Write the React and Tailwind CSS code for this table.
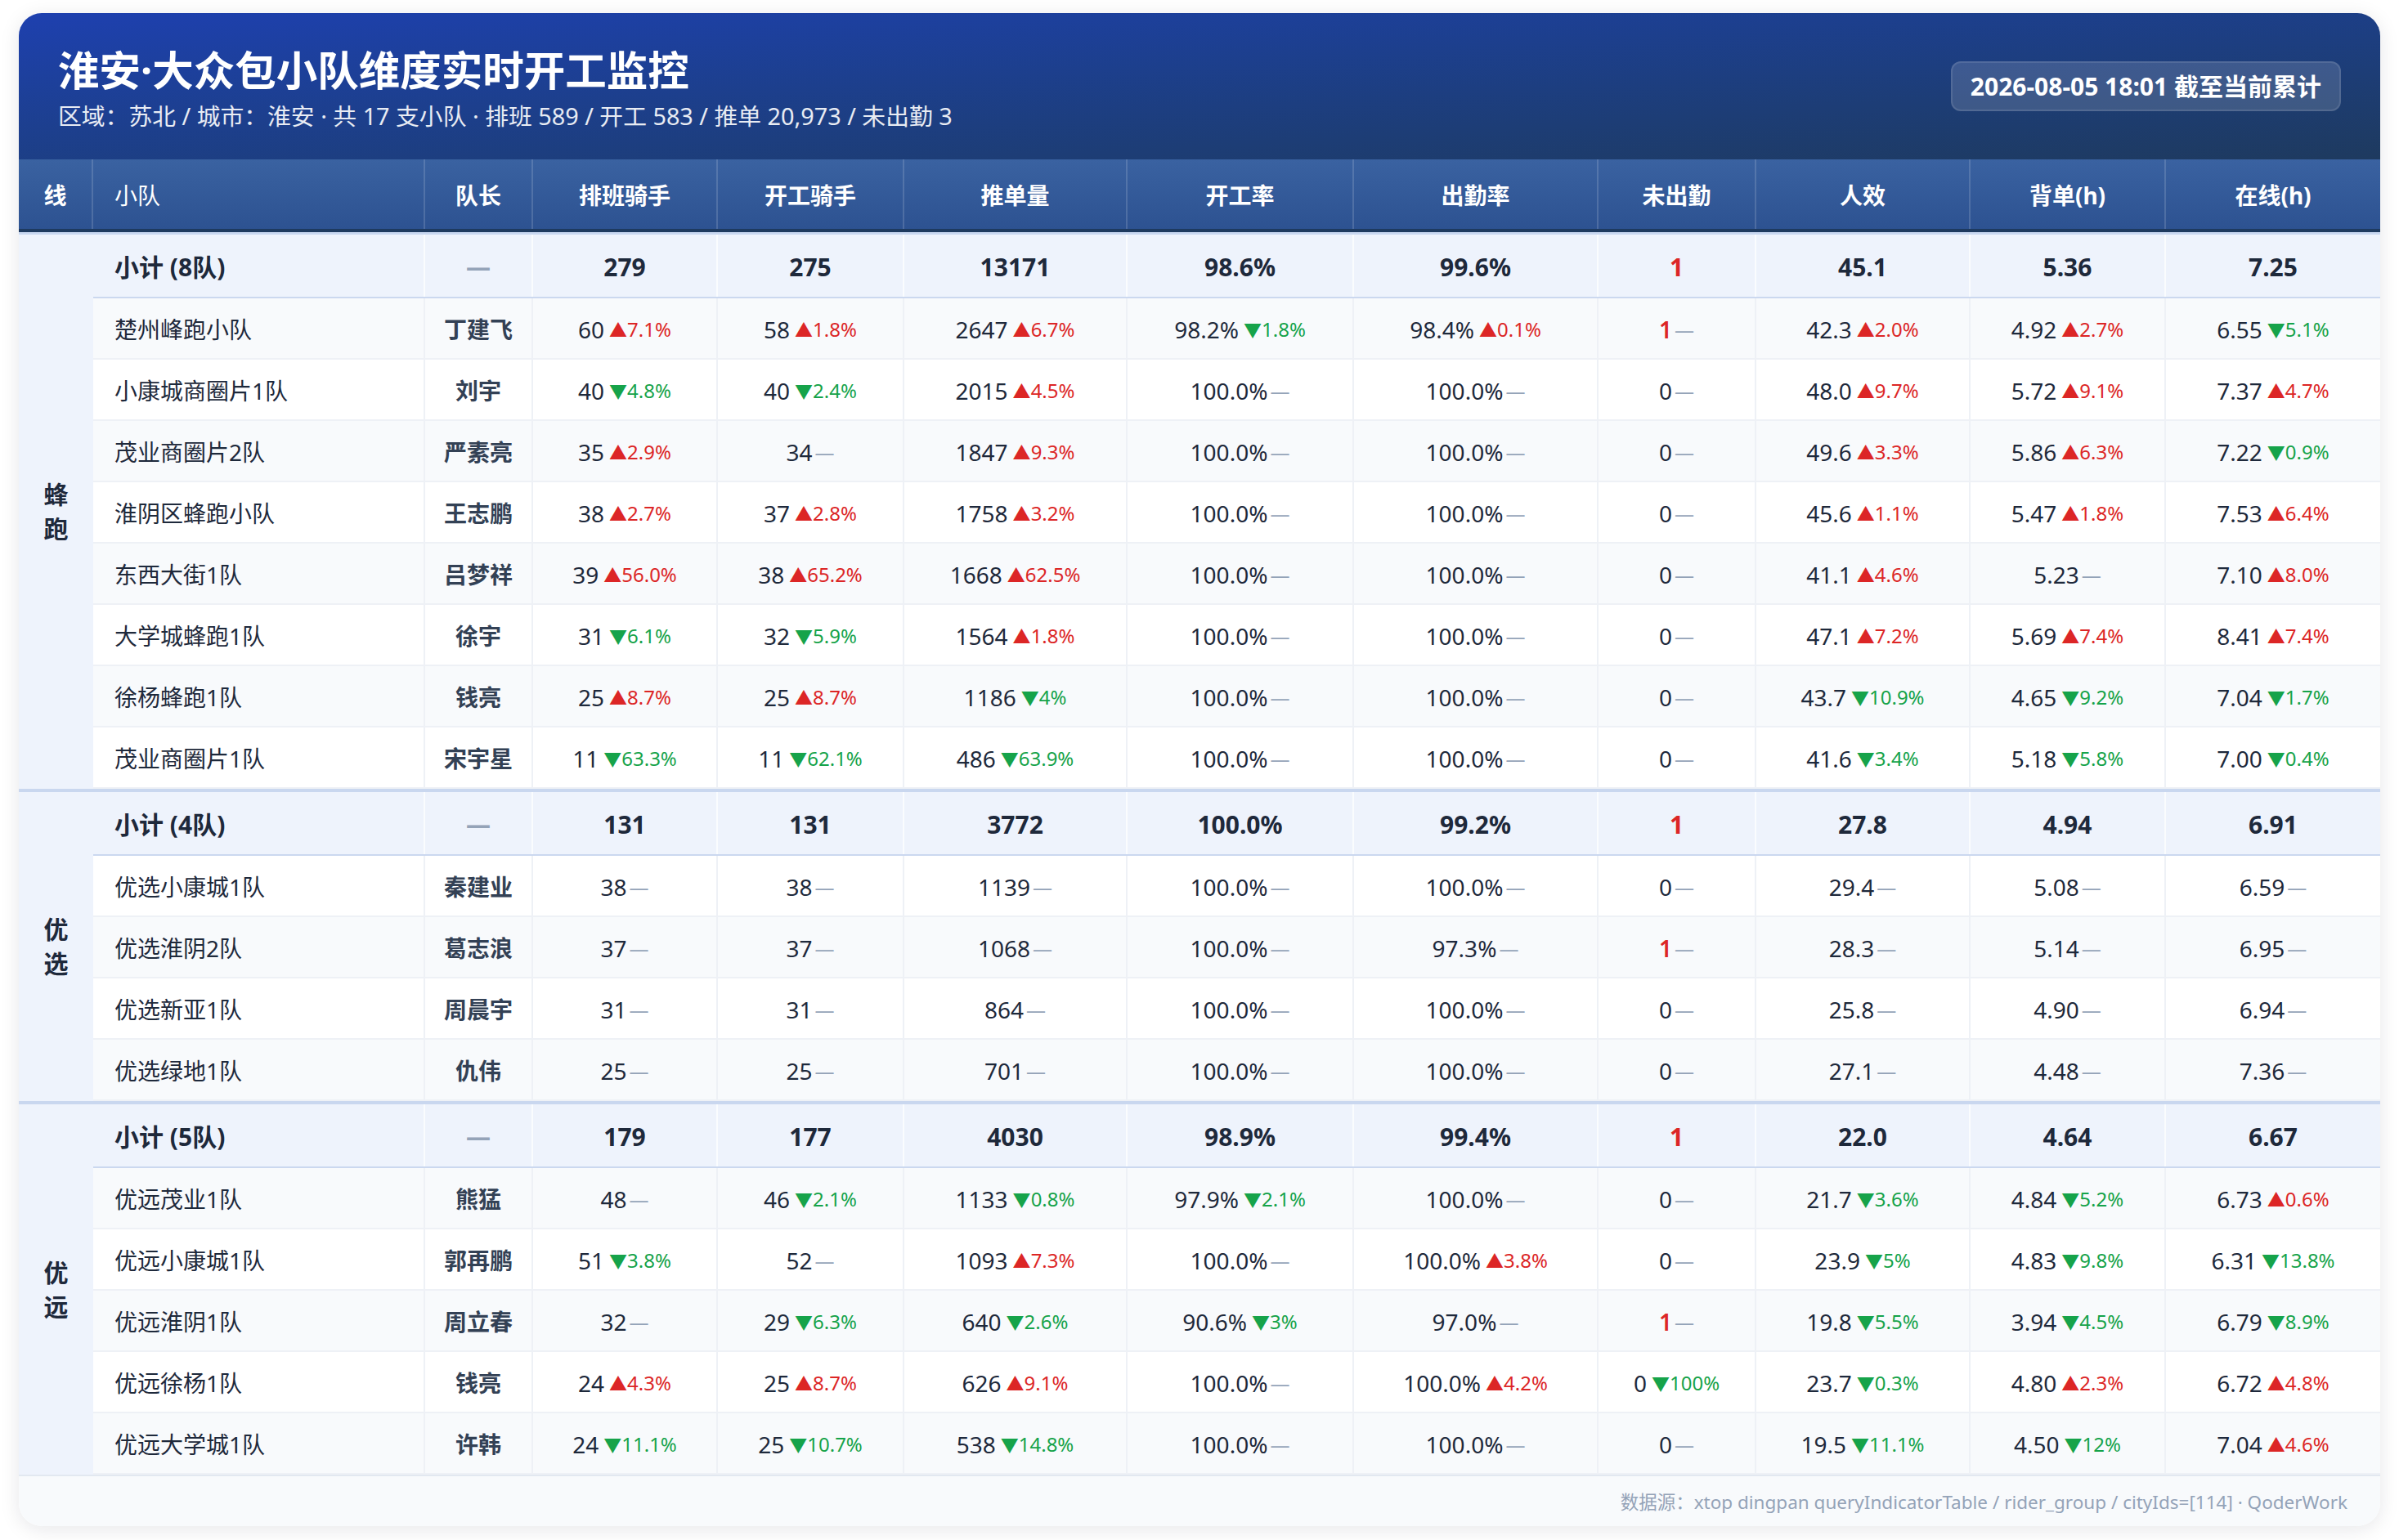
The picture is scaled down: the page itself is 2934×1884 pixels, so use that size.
import React from "react";

const GROUPS = [
  {
    line: ["蜂", "跑"],
    sub: ["小计 (8队)", "279", "275", "13171", "98.6%", "99.6%", "1", "45.1", "5.36", "7.25"],
    rows: [
      ["楚州峰跑小队", "丁建飞", ["60", "+7.1%"], ["58", "+1.8%"], ["2647", "+6.7%"], ["98.2%", "-1.8%"], ["98.4%", "+0.1%"], ["1", null, true], ["42.3", "+2.0%"], ["4.92", "+2.7%"], ["6.55", "-5.1%"]],
      ["小康城商圈片1队", "刘宇", ["40", "-4.8%"], ["40", "-2.4%"], ["2015", "+4.5%"], ["100.0%", null], ["100.0%", null], ["0", null], ["48.0", "+9.7%"], ["5.72", "+9.1%"], ["7.37", "+4.7%"]],
      ["茂业商圈片2队", "严素亮", ["35", "+2.9%"], ["34", null], ["1847", "+9.3%"], ["100.0%", null], ["100.0%", null], ["0", null], ["49.6", "+3.3%"], ["5.86", "+6.3%"], ["7.22", "-0.9%"]],
      ["淮阴区蜂跑小队", "王志鹏", ["38", "+2.7%"], ["37", "+2.8%"], ["1758", "+3.2%"], ["100.0%", null], ["100.0%", null], ["0", null], ["45.6", "+1.1%"], ["5.47", "+1.8%"], ["7.53", "+6.4%"]],
      ["东西大街1队", "吕梦祥", ["39", "+56.0%"], ["38", "+65.2%"], ["1668", "+62.5%"], ["100.0%", null], ["100.0%", null], ["0", null], ["41.1", "+4.6%"], ["5.23", null], ["7.10", "+8.0%"]],
      ["大学城蜂跑1队", "徐宇", ["31", "-6.1%"], ["32", "-5.9%"], ["1564", "+1.8%"], ["100.0%", null], ["100.0%", null], ["0", null], ["47.1", "+7.2%"], ["5.69", "+7.4%"], ["8.41", "+7.4%"]],
      ["徐杨蜂跑1队", "钱亮", ["25", "+8.7%"], ["25", "+8.7%"], ["1186", "-4%"], ["100.0%", null], ["100.0%", null], ["0", null], ["43.7", "-10.9%"], ["4.65", "-9.2%"], ["7.04", "-1.7%"]],
      ["茂业商圈片1队", "宋宇星", ["11", "-63.3%"], ["11", "-62.1%"], ["486", "-63.9%"], ["100.0%", null], ["100.0%", null], ["0", null], ["41.6", "-3.4%"], ["5.18", "-5.8%"], ["7.00", "-0.4%"]],
    ],
  },
  {
    line: ["优", "选"],
    sub: ["小计 (4队)", "131", "131", "3772", "100.0%", "99.2%", "1", "27.8", "4.94", "6.91"],
    rows: [
      ["优选小康城1队", "秦建业", ["38", null], ["38", null], ["1139", null], ["100.0%", null], ["100.0%", null], ["0", null], ["29.4", null], ["5.08", null], ["6.59", null]],
      ["优选淮阴2队", "葛志浪", ["37", null], ["37", null], ["1068", null], ["100.0%", null], ["97.3%", null], ["1", null, true], ["28.3", null], ["5.14", null], ["6.95", null]],
      ["优选新亚1队", "周晨宇", ["31", null], ["31", null], ["864", null], ["100.0%", null], ["100.0%", null], ["0", null], ["25.8", null], ["4.90", null], ["6.94", null]],
      ["优选绿地1队", "仇伟", ["25", null], ["25", null], ["701", null], ["100.0%", null], ["100.0%", null], ["0", null], ["27.1", null], ["4.48", null], ["7.36", null]],
    ],
  },
  {
    line: ["优", "远"],
    sub: ["小计 (5队)", "179", "177", "4030", "98.9%", "99.4%", "1", "22.0", "4.64", "6.67"],
    rows: [
      ["优远茂业1队", "熊猛", ["48", null], ["46", "-2.1%"], ["1133", "-0.8%"], ["97.9%", "-2.1%"], ["100.0%", null], ["0", null], ["21.7", "-3.6%"], ["4.84", "-5.2%"], ["6.73", "+0.6%"]],
      ["优远小康城1队", "郭再鹏", ["51", "-3.8%"], ["52", null], ["1093", "+7.3%"], ["100.0%", null], ["100.0%", "+3.8%"], ["0", null], ["23.9", "-5%"], ["4.83", "-9.8%"], ["6.31", "-13.8%"]],
      ["优远淮阴1队", "周立春", ["32", null], ["29", "-6.3%"], ["640", "-2.6%"], ["90.6%", "-3%"], ["97.0%", null], ["1", null, true], ["19.8", "-5.5%"], ["3.94", "-4.5%"], ["6.79", "-8.9%"]],
      ["优远徐杨1队", "钱亮", ["24", "+4.3%"], ["25", "+8.7%"], ["626", "+9.1%"], ["100.0%", null], ["100.0%", "+4.2%"], ["0", "-100%"], ["23.7", "-0.3%"], ["4.80", "+2.3%"], ["6.72", "+4.8%"]],
      ["优远大学城1队", "许韩", ["24", "-11.1%"], ["25", "-10.7%"], ["538", "-14.8%"], ["100.0%", null], ["100.0%", null], ["0", null], ["19.5", "-11.1%"], ["4.50", "-12%"], ["7.04", "+4.6%"]],
    ],
  },
];

const HEAD = ["线", "小队", "队长", "排班骑手", "开工骑手", "推单量", "开工率", "出勤率", "未出勤", "人效", "背单(h)", "在线(h)"];

function Delta({ d }) {
  if (!d) {
    return <span className="ml-[3px] text-[24px] text-[#94a3b8]">—</span>;
  }
  const up = d[0] === "+";
  return (
    <span className={"ml-[6px] text-[24px] " + (up ? "text-[#dc2626]" : "text-[#16a34a]")}>
      <span className="text-[22px]">{up ? "▲" : "▼"}</span>
      {d.slice(1)}
    </span>
  );
}

function Row({ r, even }) {
  const [name, leader, ...vals] = r;
  return (
    <div
      className={
        "grid grid-cols-[406px_132px_226px_228px_273px_277px_299px_193px_262px_239px_1fr] h-[75px] border-b-2 border-[#eef1f6] " +
        (even ? "bg-[#f8fafc]" : "bg-white")
      }
    >
      <div className="flex items-center pl-[26px] pt-[3px] border-r-2 border-[#eef1f6] text-[28px] text-[#1e293b]">{name}</div>
      <div className="flex items-center justify-center pt-[3px] border-r-2 border-[#eef1f6] text-[28px] font-bold text-[#334155]">{leader}</div>
      {vals.map((v, i) => (
        <div
          key={i}
          className={
            "flex items-center justify-center pt-[3px] text-[28px] text-[#1e293b] " +
            (i < vals.length - 1 ? "border-r-2 border-[#eef1f6]" : "")
          }
        >
          <span className={v[2] ? "text-[#dc2626] font-semibold" : ""}>{v[0]}</span>
          <Delta d={v[1]} />
        </div>
      ))}
    </div>
  );
}

function SubRow({ s }) {
  const [label, ...vals] = s;
  return (
    <div className="grid grid-cols-[406px_132px_226px_228px_273px_277px_299px_193px_262px_239px_1fr] h-[78px] border-b-2 border-[#cbd8ef] bg-[#eef3fc]">
      <div className="flex items-center pl-[26px] pt-[2px] border-r-2 border-white/70 text-[30px] font-bold text-[#1e293b]">{label}</div>
      <div className="flex items-center justify-center pt-[2px] border-r-2 border-white/70 text-[30px] font-bold text-[#94a3b8]">—</div>
      {vals.map((v, i) => (
        <div
          key={i}
          className={
            "flex items-center justify-center pt-[2px] text-[30px] font-bold " +
            (i === 5 ? "text-[#dc2626] " : "text-[#1e293b] ") +
            (i < vals.length - 1 ? "border-r-2 border-white/70" : "")
          }
        >
          {v}
        </div>
      ))}
    </div>
  );
}

export default function App() {
  let idx = 0;
  return (
    <div className="min-h-screen bg-white px-[23px] pt-[16px] pb-[17px] font-['Noto_Sans','Noto_Sans_CJK_SC',sans-serif]">
      <div className="w-full overflow-hidden rounded-[28px] bg-white shadow-[0_4px_24px_rgba(15,23,42,0.10)]">
        <header className="flex h-[179px] items-center justify-between pl-[48px] pr-[48px] pt-[5px] bg-linear-to-br from-[#1e40af] to-[#1e3a5f]">
          <div className="flex flex-col">
            <h1 className="text-[50.5px] font-bold leading-[64px] text-white">淮安·大众包小队维度实时开工监控</h1>
            <p className="mt-[3px] text-[28.8px] leading-[42px] text-white/90">
              区域：苏北 / 城市：淮安 · 共 17 支小队 · 排班 589 / 开工 583 / 推单 20,973 / 未出勤 3
            </p>
          </div>
          <div className="-mt-[5px] flex h-[61px] items-center rounded-[12px] border-2 border-white/10 bg-white/15 px-[22px] text-[30px] font-bold text-white">
            2026-08-05 18:01 截至当前累计
          </div>
        </header>

        <div className="grid grid-cols-[91px_406px_132px_226px_228px_273px_277px_299px_193px_262px_239px_1fr] h-[89px] border-b-4 border-[#1e3a5f] bg-linear-to-b from-[#3a62a1] to-[#2d5291]">
          {HEAD.map((h, i) => (
            <div
              key={h}
              className={
                "flex items-center pt-[3px] text-[28px] font-bold text-white " +
                (i === 1 ? "pl-[26px] font-normal " : "justify-center ") +
                (i < HEAD.length - 1 ? "border-r-2 border-white/15" : "")
              }
            >
              {h}
            </div>
          ))}
        </div>

        {GROUPS.map((g, gi) => {
          idx += 1;
          return (
            <div
              key={gi}
              className={"flex " + (gi === 0 ? "border-t-[3px] border-[#c8d7f0]" : "border-t-4 border-[#c9d7ef]")}
            >
              <div className="flex w-[91px] shrink-0 flex-col items-center justify-center bg-[#eef3fc] text-[30px] font-bold leading-[42px] text-[#1e293b]">
                {g.line.map((c) => (
                  <span key={c}>{c}</span>
                ))}
              </div>
              <div className="flex flex-1 flex-col">
                <SubRow s={g.sub} />
                {g.rows.map((r, ri) => {
                  idx += 1;
                  return <Row key={ri} r={r} even={idx % 2 === 0} />;
                })}
              </div>
            </div>
          );
        })}

        <footer className="flex h-[63px] items-center justify-end border-t-2 border-[#e2e8f0] bg-[#f8fafc] pr-[40px] pt-[2px] text-[22.5px] text-[#94a3b8]">
          数据源：xtop dingpan queryIndicatorTable / rider_group / cityIds=[114] · QoderWork
        </footer>
      </div>
    </div>
  );
}
